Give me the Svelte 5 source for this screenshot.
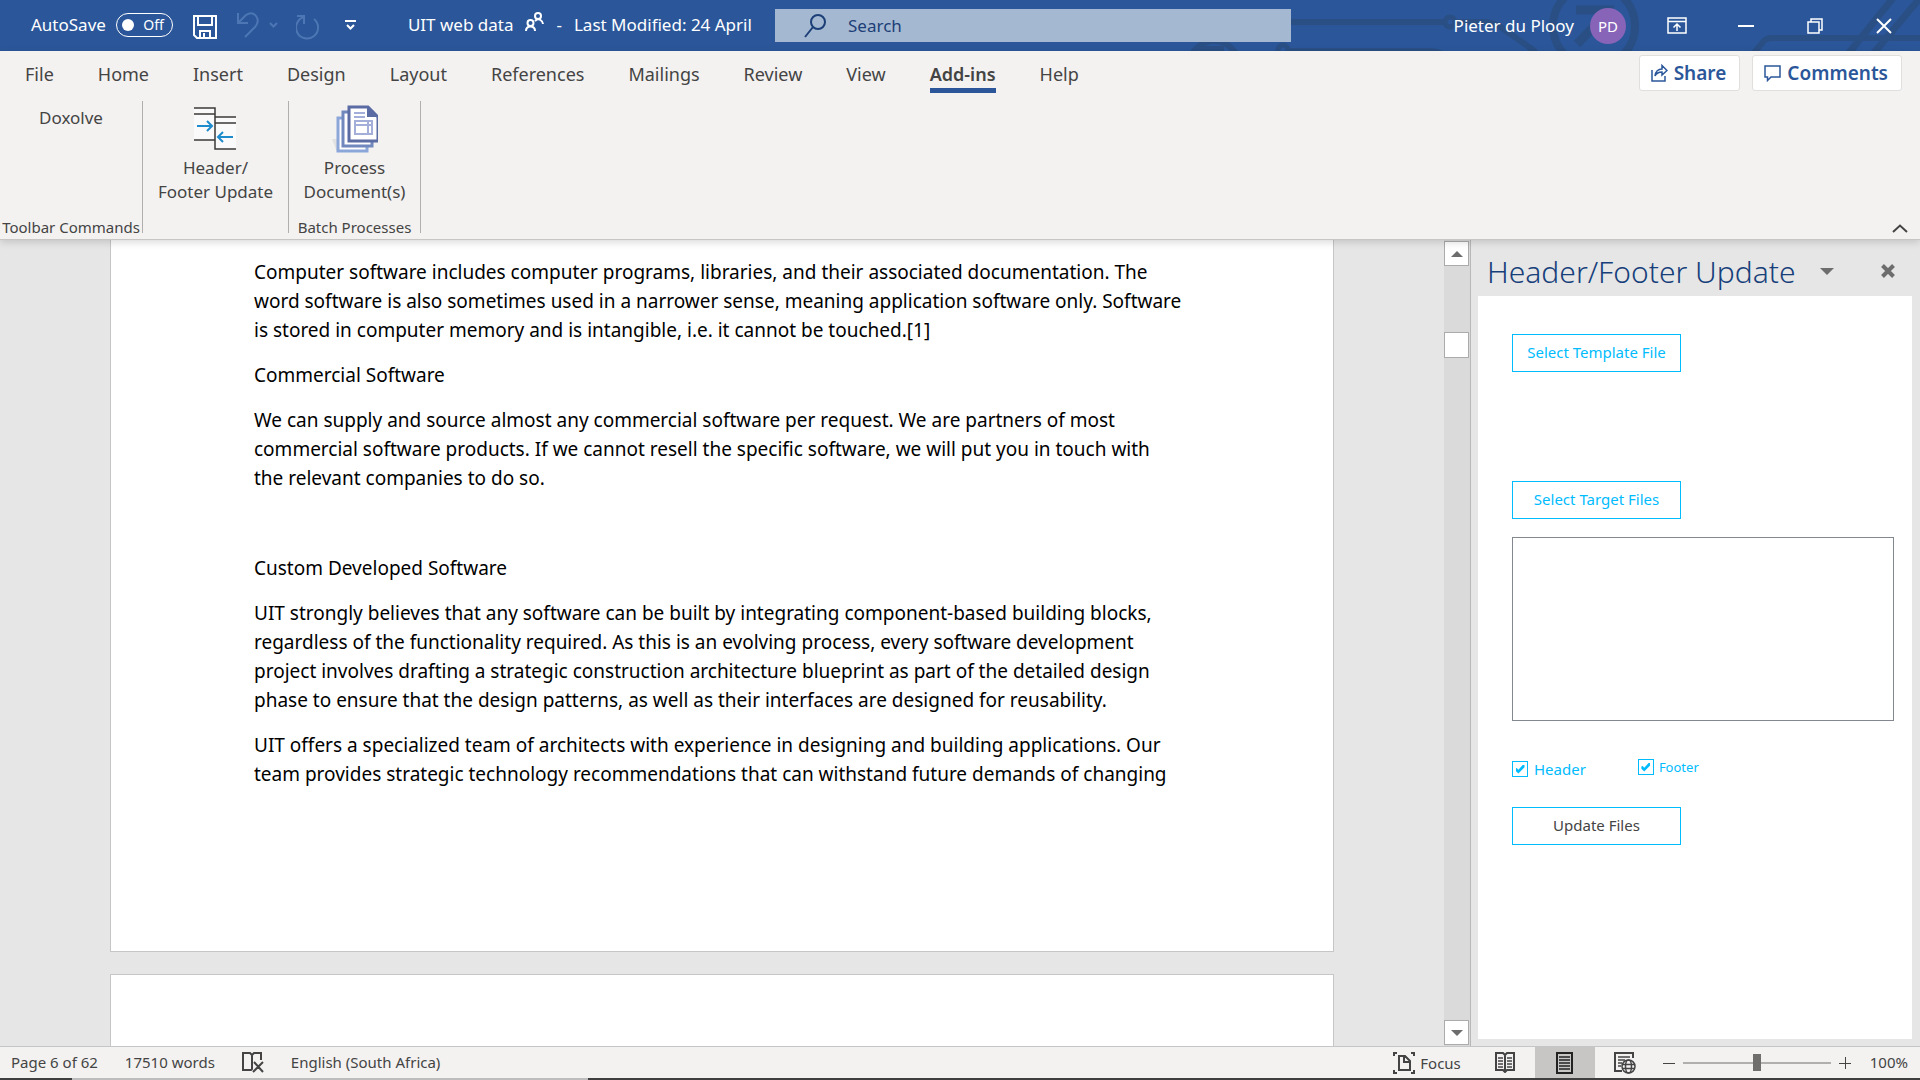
<script>
  const tabs = ['File', 'Home', 'Insert', 'Design', 'Layout', 'References', 'Mailings', 'Review', 'View', 'Add-ins', 'Help'];
  let activeTab = $state('Add-ins');

  // one entry per paragraph, one string per line
  const paragraphs = [
    [
      'Computer software includes computer programs, libraries, and their associated documentation. The',
      'word software is also sometimes used in a narrower sense, meaning application software only. Software',
      'is stored in computer memory and is intangible, i.e. it cannot be touched.[1]'
    ],
    ['Commercial Software'],
    [
      'We can supply and source almost any commercial software per request. We are partners of most',
      'commercial software products. If we cannot resell the specific software, we will put you in touch with',
      'the relevant companies to do so.'
    ],
    [''],
    ['Custom Developed Software'],
    [
      'UIT strongly believes that any software can be built by integrating component-based building blocks,',
      'regardless of the functionality required. As this is an evolving process, every software development',
      'project involves drafting a strategic construction architecture blueprint as part of the detailed design',
      'phase to ensure that the design patterns, as well as their interfaces are designed for reusability.'
    ],
    [
      'UIT offers a specialized team of architects with experience in designing and building applications. Our',
      'team provides strategic technology recommendations that can withstand future demands of changing'
    ]
  ];

  let autosave = $state(false);
  let header = $state(true);
  let footer = $state(true);
  let zoom = $state(100);
</script>

<div class="word">
  <header class="titlebar">
    <svg class="circuit" width="740" height="51" viewBox="1180 0 740 51" fill="none" stroke="#2a4f85" stroke-width="6" aria-hidden="true">
      <path d="M1291 22H1445M1456 22H1484Q1494 22 1502 28L1536 52" />
      <circle cx="1450" cy="22" r="5" stroke-width="5" />
      <circle cx="1214" cy="66" r="25" />
      <path d="M1199 49H1224" />
      <circle cx="1283" cy="50" r="5" stroke-width="5" />
      <path d="M1290 51H1430Q1438 51 1444 55" />
      <circle cx="1594" cy="26" r="41" stroke-width="8" />
      <path d="M1576 10H1614M1609 10V44M1608 12L1577 44" stroke-width="9" />
      <path d="M1753 54L1763 42Q1766 38 1772 38H1920" />
      <path d="M1848 54L1893 -2M1873 54L1920 -2" stroke-width="7" />
    </svg>

    <div class="quick">
      <label class="autosave">
        AutoSave
        <input type="checkbox" bind:checked={autosave} />
        <span class="pill"><i></i>Off</span>
      </label>
      <button class="save" aria-label="Save">
        <svg width="24" height="24" viewBox="0 0 24 24" fill="none" stroke="#fff" stroke-width="2">
          <path d="M1 1H23V23H4L1 20ZM5 1V10H19V1M7 23V16H17V23M11 18V23" />
        </svg>
      </button>
      <button class="undo faded" aria-label="Undo">
        <svg width="22" height="26" viewBox="0 0 22 26" fill="none" stroke="#5b84bf" stroke-width="2">
          <path d="M1 1V11H11M1 11L9 3Q15 -1 19 4Q23 9 18 15L8 25" />
        </svg>
        <svg width="9" height="6" viewBox="0 0 9 6" fill="none" stroke="#5b84bf" stroke-width="2"><path d="M1 1L4.500 4.500L8 1" /></svg>
      </button>
      <button class="redo faded" aria-label="Repeat">
        <svg width="24" height="26" viewBox="0 0 24 26" fill="none" stroke="#5b84bf" stroke-width="2">
          <path d="M1 2H8V10M8 3A11 11 0 1 0 18 5" />
        </svg>
      </button>
      <button class="customise" aria-label="Customize Quick Access Toolbar">
        <svg width="11" height="10" viewBox="0 0 11 10" fill="none" stroke="#fff" stroke-width="2"><path d="M0 1H11M2 5L5.500 8.500L9 5" /></svg>
      </button>
      <div class="doc-name">
        <span>UIT web data</span>
        <svg width="19" height="20" viewBox="0 0 19 20" fill="none" stroke="#fff" stroke-width="2">
          <circle cx="5.500" cy="11" r="3" /><path d="M1 19Q1 14.500 5.500 14.500Q10 14.500 10 19" />
          <circle cx="13" cy="4" r="3" /><path d="M10 9Q13 6 15.500 8Q18 9.500 18 12" />
        </svg>
        <span>-</span>
        <span>Last Modified: 24 April</span>
      </div>
    </div>

    <label class="search">
      <svg width="22" height="24" viewBox="0 0 22 24" fill="none" stroke="#1c3f77" stroke-width="2">
        <circle cx="14" cy="8" r="7" /><path d="M9 13L1 23" />
      </svg>
      <input type="text" placeholder="Search" aria-label="Search" />
    </label>

    <div class="account">
      <span>Pieter du Plooy</span>
      <span class="avatar">PD</span>
      <div class="window-buttons">
        <button aria-label="Ribbon Display Options">
          <svg width="20" height="17" viewBox="0 0 20 17" fill="none" stroke="#fff" stroke-width="1.500"><path d="M1 1H19V16H1ZM1 4.500H19M10 14V7M6.500 10.500L10 7L13.500 10.500" /></svg>
        </button>
        <button aria-label="Minimize">
          <svg width="16" height="2" viewBox="0 0 16 2"><path d="M0 0H16V2H0Z" fill="#fff" /></svg>
        </button>
        <button aria-label="Restore Down">
          <svg width="16" height="16" viewBox="0 0 16 16" fill="none" stroke="#fff" stroke-width="1.500"><path d="M1 4H12V15H1ZM4 4V1H15V12H12" /></svg>
        </button>
        <button aria-label="Close">
          <svg width="16" height="16" viewBox="0 0 16 16" fill="none" stroke="#fff" stroke-width="2"><path d="M1 1L15 15M15 1L1 15" /></svg>
        </button>
      </div>
    </div>
  </header>

  <section class="ribbon">
    <div class="tab-row">
      <nav>
        {#each tabs as tab}
          <button class="tab" class:active={tab === activeTab} onclick={() => (activeTab = tab)}>{tab}</button>
        {/each}
      </nav>
      <div class="actions">
        <button>
          <svg width="17" height="18" viewBox="0 0 17 18" fill="none" stroke="#2b579a" stroke-width="1.500">
            <path d="M1 6V17H14V12M4 12Q5 5 11 5V1.500L16 6.500L11 11V8Q6 8 4 12Z" />
          </svg>
          Share
        </button>
        <button>
          <svg width="17" height="17" viewBox="0 0 17 17" fill="none" stroke="#2b579a" stroke-width="1.500">
            <path d="M1 1H16V12H7L3.500 15.500V12H1Z" />
          </svg>
          Comments
        </button>
      </div>
    </div>

    <div class="groups">
      <div class="group toolbar">
        <button class="plain">Doxolve</button>
        <span class="caption">Toolbar Commands</span>
      </div>
      <div class="group update">
        <button class="big">
          <svg width="42" height="44" viewBox="0 0 42 44" fill="none">
            <path d="M0 1H21V33H0ZM21 10H42V42H21Z" fill="#fafafa" />
            <path d="M0 1H21V42H42M0 7H21M0 33H21M21 10H42M21 16H42" stroke="#3b3a39" stroke-width="1.500" />
            <path d="M3 19H18M13 14L18 19L13 24M39 30H24M29 25L24 30L29 35" stroke="#1e8bcd" stroke-width="2" />
          </svg>
          <span>Header/<br />Footer Update</span>
        </button>
      </div>
      <div class="group batch">
        <button class="big">
          <svg width="46" height="48" viewBox="0 0 46 48" fill="none">
            <path d="M0 34L5 47V34Z" fill="#e1e1e1" />
            <path d="M6 13H35V46H6Z" fill="#fff" stroke="#8ca6da" stroke-width="3" />
            <path d="M11 7H40V41H11Z" fill="#fff" stroke="#7088bd" stroke-width="3" />
            <path d="M17 2H36L46 12V36H17Z" fill="#fff" stroke="#5b6ba4" stroke-width="3" />
            <path d="M35 1L46 12H35Z" fill="#5b6ba4" />
            <path d="M22 8H33M22 12H33M23 16H40V29H23ZM23 20H40M36 16V29" stroke="#a3afd8" stroke-width="2" />
          </svg>
          <span>Process<br />Document(s)</span>
        </button>
        <span class="caption">Batch Processes</span>
      </div>
      <button class="collapse" aria-label="Collapse the Ribbon">
        <svg width="16" height="9" viewBox="0 0 16 9" fill="none" stroke="#444" stroke-width="2"><path d="M1 8L8 1.500L15 8" /></svg>
      </button>
    </div>
  </section>

  <div class="workspace">
    <main class="canvas">
      <article class="page">
        {#each paragraphs as lines}
          <p>
            {#each lines as line, i}{#if i}<br />{/if}{line}{/each}
          </p>
        {/each}
      </article>
      <article class="page next"></article>
    </main>

    <div class="scrollbar">
      <button aria-label="Scroll up"><svg width="12" height="6" viewBox="0 0 12 6"><path d="M0 6L6 0L12 6Z" fill="#6d6d6d" /></svg></button>
      <div class="track"><div class="thumb"></div></div>
      <button aria-label="Scroll down"><svg width="12" height="6" viewBox="0 0 12 6"><path d="M0 0H12L6 6Z" fill="#6d6d6d" /></svg></button>
    </div>

    <aside class="pane">
      <div class="pane-head">
        <h2>Header/Footer Update</h2>
        <button aria-label="Task pane options"><svg width="14" height="7" viewBox="0 0 14 7"><path d="M0 0H14L7 7Z" fill="#6d6d6d" /></svg></button>
        <button class="close" aria-label="Close pane"><svg width="14" height="14" viewBox="0 0 14 14" stroke="#6d6d6d" stroke-width="4"><path d="M1.500 1.500L12.500 12.500M12.500 1.500L1.500 12.500" /></svg></button>
      </div>
      <form class="pane-body" onsubmit={(e) => e.preventDefault()}>
        <button type="button" class="template">Select Template File</button>
        <button type="button">Select Target Files</button>
        <select multiple aria-label="Target files"></select>
        <div class="options">
          <label class="check">
            <input type="checkbox" bind:checked={header} />
            Header
          </label>
          <label class="check small">
            <input type="checkbox" bind:checked={footer} />
            Footer
          </label>
        </div>
        <button type="submit" class="submit">Update Files</button>
      </form>
    </aside>
  </div>

  <footer class="statusbar">
    <span>Page 6 of 62</span>
    <span>17510 words</span>
    <button aria-label="Proofing errors">
      <svg width="22" height="21" viewBox="0 0 22 21" fill="none" stroke="#444" stroke-width="2">
        <path d="M10 3L8 1H1V18H9L10 17V3L12 1H19V8M12 10L21 20M21 10L11 20" />
      </svg>
    </button>
    <span>English (South Africa)</span>
    <div class="views">
      <button class="focus">
        <svg width="22" height="22" viewBox="0 0 22 22" fill="none" stroke="#444" stroke-width="2">
          <path d="M4 1H1V4M18 1H21V4M4 21H1V18M18 21H21V18M6 4H12L17 9V18H6ZM11 4V10H17" />
        </svg>
        Focus
      </button>
      <button class="view" aria-label="Read Mode">
        <svg width="20" height="21" viewBox="0 0 20 21" fill="none" stroke="#444" stroke-width="2">
          <path d="M10 3L8 1H1V18H8L10 20L12 18H19V1H12L10 3V19" />
          <path d="M3 6H8M3 9H8M3 12H8M3 15H8M12 6H17M12 9H17M12 12H17M12 15H17" stroke-width="1.500" />
        </svg>
      </button>
      <button class="view selected" aria-label="Print Layout">
        <svg width="17" height="22" viewBox="0 0 17 22" fill="none" stroke="#222" stroke-width="2">
          <path d="M1 1H16V21H1Z" />
          <path d="M3 5H14M3 8H14M3 11H14M3 14H14M3 17H14" stroke-width="1.500" />
        </svg>
      </button>
      <button class="view" aria-label="Web Layout">
        <svg width="22" height="22" viewBox="0 0 22 22" fill="none" stroke="#444" stroke-width="2">
          <path d="M19 6V1H1V19H8" />
          <path d="M4 5H16M4 8H11M4 11H8M4 14H7" stroke-width="1.500" />
          <g stroke-width="1.500"><circle cx="14.500" cy="14.500" r="6.500" /><ellipse cx="14.500" cy="14.500" rx="3" ry="6.500" /><path d="M8.500 12.500H20.500M8.500 16.500H20.500" /></g>
        </svg>
      </button>
      <button class="step" aria-label="Zoom out"><svg width="12" height="12" viewBox="0 0 12 12" stroke="#444"><path d="M0 6.500H12" /></svg></button>
      <input type="range" min="0" max="200" bind:value={zoom} aria-label="Zoom" />
      <button class="step" aria-label="Zoom in"><svg width="12" height="12" viewBox="0 0 12 12" stroke="#444"><path d="M0 6.500H12M6.500 0V12" /></svg></button>
      <span class="percent">{zoom}%</span>
    </div>
  </footer>
  <div class="taskbar-edge"></div>
</div>

<style>
  :global(body) {
    margin: 0;
    overflow: hidden;
  }
  .word {
    display: flex;
    flex-direction: column;
    height: 100vh;
    font-family: 'Noto Sans', 'Open Sans', sans-serif;
    font-size: 17px;
    color: #444;
    background: #e6e6e6;
  }
  button {
    font: inherit;
    color: inherit;
    background: none;
    border: 0;
    padding: 0;
    white-space: nowrap;
  }
  svg {
    display: block;
    flex: none;
  }

  /* title bar */
  .titlebar {
    position: relative;
    display: grid;
    grid-template-columns: 775fr 516fr 629fr;
    align-items: center;
    height: 51px;
    flex: none;
    background: #2b579a;
    color: #fff;
    white-space: nowrap;
  }
  .circuit {
    position: absolute;
    top: 0;
    right: 0;
  }
  .quick {
    display: flex;
    align-items: center;
    padding: 0 0 2px 31px;
  }
  .autosave {
    display: flex;
    align-items: center;
    gap: 10px;
  }
  .autosave input {
    position: absolute;
    opacity: 0;
  }
  .pill {
    display: flex;
    align-items: center;
    justify-content: space-between;
    box-sizing: border-box;
    width: 57px;
    height: 24px;
    padding: 0 8px 0 5px;
    border: 1px solid #fff;
    border-radius: 12px;
    font-size: 14px;
  }
  .pill i {
    width: 12px;
    height: 12px;
    border-radius: 50%;
    background: #fff;
  }
  .save {
    margin: 4px 20px 0;
  }
  .undo {
    display: flex;
    align-items: center;
    gap: 10px;
  }
  .redo {
    margin: 4px 25px 0 18px;
  }
  .faded {
    opacity: 0.7;
  }
  .doc-name {
    display: flex;
    align-items: center;
    gap: 12px;
    margin-left: 52px;
  }
  .doc-name svg {
    margin-bottom: 6px;
  }
  .search {
    position: relative;
    display: flex;
    align-items: center;
    gap: 22px;
    height: 33px;
    padding-left: 29px;
    background: #a5b8d1;
  }
  .search input {
    flex: 1;
    border: 0;
    padding: 0;
    background: none;
    font: inherit;
    outline: none;
  }
  .search input::placeholder {
    color: #1c3f77;
    opacity: 1;
  }
  .account {
    position: relative;
    display: flex;
    align-items: center;
    justify-content: flex-end;
    gap: 16px;
    padding-right: 2px;
  }
  .avatar {
    display: flex;
    align-items: center;
    justify-content: center;
    width: 36px;
    height: 36px;
    border-radius: 50%;
    background: #8764b8;
    font-size: 15px;
  }
  .window-buttons {
    display: flex;
  }
  .window-buttons button {
    display: flex;
    align-items: center;
    justify-content: center;
    width: 69px;
    height: 51px;
  }

  /* ribbon */
  .ribbon {
    position: relative;
    z-index: 1;
    flex: none;
    background: #f3f2f1;
    border-bottom: 1px solid #c8c6c4;
    box-shadow: 0 2px 8px rgba(0, 0, 0, 0.16);
  }
  .tab-row {
    display: flex;
    justify-content: space-between;
    height: 50px;
    padding: 0 18px 0 4px;
  }
  nav {
    display: flex;
    align-items: flex-start;
    gap: 44px;
    padding-left: 21px;
  }
  .tab {
    height: 42px;
    font-size: 18px;
    border-bottom: 5px solid transparent;
    padding-top: 8px;
  }
  .tab.active {
    font-weight: 600;
    border-color: #2b579a;
  }
  .actions {
    display: flex;
    gap: 12px;
    padding-top: 4px;
  }
  .actions button {
    display: flex;
    align-items: center;
    gap: 6px;
    height: 36px;
    padding: 0 13px 0 11px;
    border: 1px solid #e1dfdd;
    border-radius: 3px;
    background: #fff;
    color: #2b579a;
    font-size: 19px;
    font-weight: 600;
  }
  .groups {
    display: flex;
    height: 132px;
    padding-bottom: 6px;
  }
  .group {
    display: flex;
    flex-direction: column;
    justify-content: space-between;
    align-items: center;
    box-sizing: border-box;
    border-right: 1px solid #b1afad;
    white-space: nowrap;
  }
  .toolbar {
    width: 143px;
  }
  .update {
    width: 146px;
  }
  .batch {
    width: 132px;
  }
  .plain {
    height: 32px;
  }
  .big {
    display: flex;
    flex-direction: column;
    align-items: center;
    padding-top: 4px;
    line-height: 24px;
  }
  .big svg {
    height: 48px;
    margin-bottom: 3px;
  }
  .caption {
    font-size: 15px;
    line-height: 12px;
  }
  .collapse {
    align-self: flex-end;
    margin: 0 12px 0 auto;
  }

  /* document */
  .workspace {
    display: flex;
    flex: 1;
    min-height: 0;
  }
  .canvas {
    flex: 1;
    overflow: hidden;
    padding: 0 110px;
  }
  .page {
    box-sizing: border-box;
    padding: 18px 143px 146px;
    border: 1px solid #c6c6c6;
    border-top: 0;
    background: #fff;
    color: #000;
    font-size: 19px;
    line-height: 29px;
    white-space: nowrap;
  }
  .page p {
    min-height: 29px;
    margin: 0 0 16px;
  }
  .page.next {
    margin-top: 22px;
    height: 711px;
    border-top: 1px solid #c6c6c6;
  }
  .scrollbar {
    display: flex;
    flex-direction: column;
    width: 25px;
    padding: 1px 1px 1px 0;
    background: #dadada;
    border-right: 1px solid #b8b8b8;
  }
  .scrollbar button {
    display: flex;
    align-items: center;
    justify-content: center;
    box-sizing: border-box;
    height: 25px;
    border: 1px solid #ababab;
    background: #fff;
  }
  .track {
    flex: 1;
    padding-top: 66px;
  }
  .thumb {
    height: 24px;
    border: 1px solid #ababab;
    background: #fff;
  }

  /* task pane */
  .pane {
    display: flex;
    flex-direction: column;
    box-sizing: border-box;
    width: 449px;
    padding: 0 8px 7px 7px;
  }
  .pane-head {
    display: flex;
    align-items: center;
    height: 56px;
    padding: 0 17px 0 9px;
  }
  h2 {
    flex: none;
    margin: 6px 24px 0 0;
    font-size: 30px;
    font-weight: 300;
    color: #17407b;
  }
  .pane-head button {
    margin-top: 6px;
  }
  .pane-head .close {
    margin-left: auto;
  }
  .pane-body {
    display: flex;
    flex-direction: column;
    align-items: flex-start;
    flex: 1;
    padding: 38px 18px 0 34px;
    background: #fff;
    font-size: 15px;
    color: #00bcff;
  }
  .pane-body button {
    box-sizing: border-box;
    width: 169px;
    height: 38px;
    padding-bottom: 2px;
    border: 1px solid #00bcff;
  }
  .pane-body .template {
    margin-bottom: 109px;
  }
  .pane-body .submit {
    color: #444;
  }
  select {
    appearance: none;
    box-sizing: border-box;
    width: 100%;
    height: 184px;
    margin: 18px 0 38px;
    border: 1px solid #828790;
    border-radius: 0;
    background: #fff;
  }
  .options {
    display: flex;
    align-items: flex-start;
    gap: 52px;
    margin-bottom: 28px;
  }
  .check {
    display: flex;
    align-items: center;
    gap: 6px;
    height: 20px;
  }
  .check.small {
    height: 16px;
    font-size: 13px;
    gap: 5px;
  }
  .check input {
    appearance: none;
    display: grid;
    place-items: center;
    box-sizing: border-box;
    width: 16px;
    height: 16px;
    margin: 0;
    border: 1px solid #00bcff;
  }
  .check input:checked::before {
    content: '';
    width: 9px;
    height: 9px;
    background: #00bcff;
    clip-path: polygon(0 45%, 0 70%, 32% 100%, 100% 30%, 100% 0, 85% 0, 32% 58%, 14% 40%);
  }

  /* status bar */
  .statusbar {
    display: flex;
    align-items: center;
    flex: none;
    gap: 27px;
    height: 31px;
    padding-left: 11px;
    border-top: 1px solid #c6c6c6;
    background: #f3f2f1;
    font-size: 15px;
    line-height: 20px;
    white-space: nowrap;
  }
  .statusbar span {
    padding-bottom: 2px;
  }
  .views {
    display: flex;
    align-items: center;
    height: 100%;
    margin-left: auto;
    padding-right: 12px;
  }
  .focus {
    display: flex;
    align-items: center;
    gap: 5px;
    margin-right: 14px;
  }
  .view {
    display: flex;
    align-items: center;
    justify-content: center;
    width: 60px;
    height: 100%;
  }
  .view.selected {
    background: #c8c6c4;
  }
  .step {
    margin: 0 8px;
  }
  input[type='range'] {
    appearance: none;
    width: 148px;
    height: 18px;
    margin: 0;
    background: linear-gradient(#b1afad, #b1afad) center / 100% 2px no-repeat;
  }
  input[type='range']::-webkit-slider-thumb {
    appearance: none;
    width: 8px;
    height: 17px;
    background: #6f6e6d;
  }
  .percent {
    margin-left: 11px;
  }
  .taskbar-edge {
    flex: none;
    height: 2px;
    background: linear-gradient(90deg, #3f3f3f 72px, #bdbdbd 72px, #bdbdbd 588px, #3f3f3f 588px);
  }
</style>
